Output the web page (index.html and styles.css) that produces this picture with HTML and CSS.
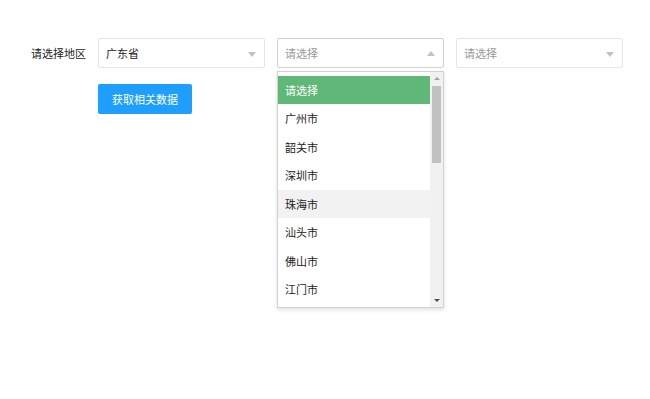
FILE: index.html
```html
<!DOCTYPE html>
<html lang="zh-CN">
<head>
<meta charset="utf-8">
<title>选择地区</title>
<link rel="stylesheet" href="styles.css">
</head>
<body>
<form class="form">
  <div class="form-item">
    <label class="label">请选择地区</label>
    <div class="select">
      <div class="select-title"><span class="value">广东省</span><i class="edge"></i></div>
    </div>
    <div class="select select-open">
      <div class="select-title"><span class="placeholder">请选择</span><i class="edge edge-up"></i></div>
      <div class="dropdown">
        <ul class="options">
          <li class="option option-this">请选择</li>
          <li class="option">广州市</li>
          <li class="option">韶关市</li>
          <li class="option">深圳市</li>
          <li class="option option-hover">珠海市</li>
          <li class="option">汕头市</li>
          <li class="option">佛山市</li>
          <li class="option">江门市</li>
        </ul>
        <div class="scrollbar">
          <span class="sb-btn"><i class="sb-arrow sb-up"></i></span>
          <span class="sb-track"><span class="sb-thumb"></span></span>
          <span class="sb-btn"><i class="sb-arrow sb-down"></i></span>
        </div>
      </div>
    </div>
    <div class="select">
      <div class="select-title"><span class="placeholder">请选择</span><i class="edge"></i></div>
    </div>
  </div>
  <div class="form-item form-actions">
    <button type="button" class="btn">获取相关数据</button>
  </div>
</form>
</body>
</html>
```

FILE: styles.css
```css
html, body {
  margin: 0;
  padding: 0;
  background: #fff;
}
body {
  min-height: 399px;
  font-family: "Noto Sans CJK SC", "Noto Sans", "Liberation Sans", sans-serif;
  font-size: 11px;
  color: #222;
}
.form {
  padding-top: 38px;
}
.form-item {
  display: flex;
  align-items: center;
}
.label {
  width: 98px;
  box-sizing: border-box;
  padding-right: 12px;
  text-align: right;
  line-height: 30px;
  color: #222;
}
.select {
  position: relative;
  width: 167px;
  height: 30px;
  margin-right: 12px;
}
.select-title {
  box-sizing: border-box;
  height: 30px;
  border: 1px solid #e6e6e6;
  border-radius: 2px;
  background: #fff;
  padding-left: 7px;
  line-height: 28px;
  position: relative;
}
.select-open .select-title {
  border-color: #d2d2d2;
}
.value {
  color: #222;
}
.placeholder {
  color: #999;
}
.edge {
  position: absolute;
  right: 8px;
  top: 13px;
  width: 0;
  height: 0;
  border-style: solid;
  border-width: 5px 4.5px 0 4.5px;
  border-color: #c2c2c2 transparent transparent transparent;
}
.edge-up {
  top: 12px;
  border-width: 0 4.5px 5px 4.5px;
  border-color: transparent transparent #c2c2c2 transparent;
}
.dropdown {
  position: absolute;
  left: 0;
  top: 33px;
  z-index: 10;
  box-sizing: border-box;
  width: 167px;
  height: 237px;
  border: 1px solid #d2d2d2;
  background: #fff;
  box-shadow: 0 2px 4px rgba(0, 0, 0, 0.12);
  display: flex;
}
.options {
  list-style: none;
  margin: 0;
  padding: 4px 0 0 0;
  flex: 1;
  overflow: hidden;
}
.option {
  height: 28.44px;
  line-height: 28.44px;
  padding: 0 7px;
  color: #222;
  white-space: nowrap;
}
.option-this {
  background: #5fb878;
  color: #fff;
}
.option-hover {
  background: #f2f2f2;
}
.scrollbar {
  width: 13px;
  background: #f1f1f1;
  display: flex;
  flex-direction: column;
}
.sb-btn {
  height: 13px;
  display: flex;
  align-items: center;
  justify-content: center;
}
.sb-track {
  flex: 1;
  padding-top: 1px;
}
.sb-thumb {
  display: block;
  margin: 0 2px;
  height: 77px;
  background: #c1c1c1;
}
.sb-arrow {
  width: 0;
  height: 0;
  border-style: solid;
}
.sb-up {
  border-width: 0 3px 3px 3px;
  border-color: transparent transparent #a3a3a3 transparent;
}
.sb-down {
  border-width: 3px 3px 0 3px;
  border-color: #505050 transparent transparent transparent;
}
.form-actions {
  padding-left: 98px;
  margin-top: 16px;
}
.btn {
  height: 30px;
  padding: 0 14px;
  border: none;
  border-radius: 2px;
  background: #1e9fff;
  color: #fff;
  font-family: inherit;
  font-size: 11px;
  line-height: 30px;
  cursor: pointer;
}
```
